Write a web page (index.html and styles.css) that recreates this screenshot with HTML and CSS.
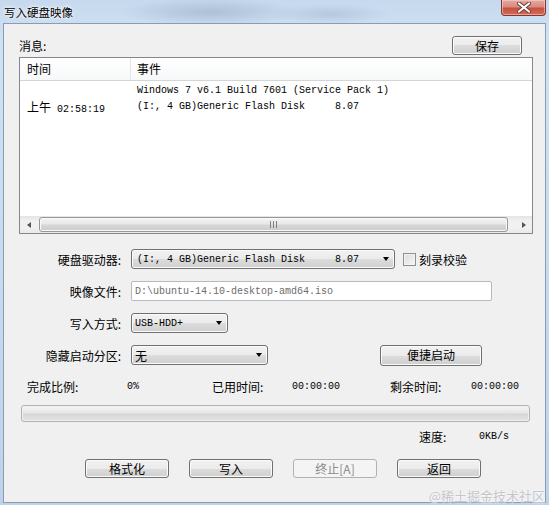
FILE: index.html
```html
<!DOCTYPE html>
<html lang="zh-CN">
  <head>
    <meta charset="UTF-8" />
    <meta name="viewport" content="width=device-width, initial-scale=1.0" />
    <title>写入硬盘映像</title>
    <link rel="stylesheet" href="styles.css">
  </head>
  <body>
    <div class="window">
      <div class="titlebar">
        <span class="title">写入硬盘映像</span>
        <div class="close-btn">
          <svg width="14" height="11" viewBox="0 0 14 11">
            <path d="M2 1.5 L12 9.5 M12 1.5 L2 9.5" stroke="#6b3b36" stroke-width="4" stroke-linecap="round" />
            <path d="M2 1.5 L12 9.5 M12 1.5 L2 9.5" stroke="#fff" stroke-width="2.2" stroke-linecap="round" />
          </svg>
        </div>
      </div>
      <div class="client">
        <div class="msg-head">
          <span>消息:</span>
          <button class="btn save-btn">保存</button>
        </div>
        <div class="listbox">
          <div class="list-header">
            <div class="col-time">时间</div>
            <div class="col-event">事件</div>
          </div>
          <div class="list-body">
            <div class="list-row">
              <div class="col-time"></div>
              <div class="col-event mono">Windows 7 v6.1 Build 7601 (Service Pack 1)</div>
            </div>
            <div class="list-row">
              <div class="col-time">上午<span class="mono"> 02:58:19</span></div>
              <div class="col-event mono">(I:, 4 GB)Generic Flash Disk     8.07</div>
            </div>
          </div>
          <div class="hscroll">
            <div class="scroll-arrow"><span class="tri-left"></span></div>
            <div class="scroll-thumb"><span class="grip"></span></div>
            <div class="scroll-arrow"><span class="tri-right"></span></div>
          </div>
        </div>
        <div class="form">
          <label class="form-label">硬盘驱动器:</label>
          <div class="form-field">
            <div class="combo drive-combo">
              <span class="mono">(I:, 4 GB)Generic Flash Disk     8.07</span>
              <span class="combo-arrow"></span>
            </div>
            <div class="check">
              <span class="check-box"></span>
              <span>刻录校验</span>
            </div>
          </div>
          <label class="form-label">映像文件:</label>
          <div class="form-field">
            <input class="textbox mono" type="text" value="D:\ubuntu-14.10-desktop-amd64.iso" readonly />
          </div>
          <label class="form-label">写入方式:</label>
          <div class="form-field">
            <div class="combo mode-combo">
              <span class="mono">USB-HDD+</span>
              <span class="combo-arrow"></span>
            </div>
          </div>
          <label class="form-label">隐藏启动分区:</label>
          <div class="form-field">
            <div class="combo hide-combo">
              <span>无</span>
              <span class="combo-arrow"></span>
            </div>
            <button class="btn quick-btn">便捷启动</button>
          </div>
        </div>
        <div class="stats">
          <span>完成比例:</span>
          <span class="mono">0%</span>
          <span>已用时间:</span>
          <span class="mono">00:00:00</span>
          <span>剩余时间:</span>
          <span class="mono">00:00:00</span>
        </div>
        <div class="progress"></div>
        <div class="speed">
          <span class="speed-label">速度:</span>
          <span class="mono">0KB/s</span>
        </div>
        <div class="actions">
          <button class="btn action-btn">格式化</button>
          <button class="btn action-btn">写入</button>
          <button class="btn action-btn" disabled>终止[A]</button>
          <button class="btn action-btn">返回</button>
        </div>
      </div>
      <div class="watermark">@稀土掘金技术社区</div>
    </div>
  </body>
</html>
```
FILE: styles.css
```css
* {
  box-sizing: border-box;
}
body {
  margin: 0;
  width: 549px;
  height: 505px;
  overflow: hidden;
  font-family: "Noto Sans CJK SC", sans-serif;
  font-size: 12px;
  color: #000;
  background-color: #bcd1e8;
}
.mono {
  font-family: "Liberation Mono", "Noto Sans CJK SC", monospace;
  font-size: 10px;
  white-space: pre;
}
.window {
  position: relative;
  height: 505px;
  display: flex;
  flex-direction: column;
  background:
    radial-gradient(ellipse 90px 14px at 210px 12px, rgba(150, 170, 195, 0.55), transparent),
    radial-gradient(ellipse 60px 10px at 330px 14px, rgba(150, 170, 195, 0.4), transparent),
    linear-gradient(180deg, #c6d9ee 0%, #d0e1f3 8%, #bed3ea 100%);
}
.titlebar {
  height: 23px;
  display: flex;
  justify-content: space-between;
  align-items: flex-start;
}
.title {
  padding: 4px 0 0 4px;
  line-height: 16px;
  font-size: 11.5px;
  text-shadow: 0 0 5px #fff, 0 0 3px #fff;
}
.close-btn {
  width: 45px;
  height: 16px;
  margin-right: 3px;
  border: 1px solid #7d3a33;
  border-top: none;
  border-radius: 0 0 4px 4px;
  background: linear-gradient(180deg, #e4aaa2 0%, #d88b80 45%, #c9503f 55%, #d46a55 100%);
  box-shadow: inset 0 0 0 1px rgba(255, 220, 210, 0.5);
  display: flex;
  align-items: center;
  justify-content: center;
}
.client {
  flex: 1;
  margin: 0 3px 2px;
  border: 1px solid #8a9cb3;
  background-color: #f0f0f0;
  display: flex;
  flex-direction: column;
}
.msg-head {
  display: flex;
  justify-content: space-between;
  align-items: center;
  height: 19px;
  margin-top: 12px;
  padding: 0 23px 0 15px;
}
.btn {
  height: 19px;
  padding: 0;
  border: 1px solid #707070;
  border-radius: 3px;
  background: linear-gradient(180deg, #f2f2f2 0%, #ebebeb 50%, #dddddd 50%, #cfcfcf 100%);
  box-shadow: inset 0 0 0 1px #fbfbfb;
  font-family: "Noto Sans CJK SC", sans-serif;
  font-size: 12px;
  line-height: 16px;
  color: #000;
}
.btn:disabled {
  border-color: #adb2b5;
  background: #f4f4f4;
  box-shadow: none;
  color: #8a8a8a;
}
.save-btn {
  width: 70px;
}
.listbox {
  height: 177px;
  margin: 2px 12px 0 15px;
  border: 1px solid #828790;
  background-color: #fff;
  display: flex;
  flex-direction: column;
}
.list-header {
  height: 23px;
  display: flex;
  line-height: 22px;
  border-bottom: 1px solid #d5d5d5;
  background: linear-gradient(180deg, #ffffff 0%, #f7f8f9 100%);
}
.list-header .col-time {
  border-right: 1px solid #e3e5e8;
}
.col-time {
  width: 111px;
  padding-left: 7px;
}
.col-event {
  padding-left: 6px;
}
.list-body {
  flex: 1;
  padding-top: 2px;
}
.list-row {
  display: flex;
  height: 16px;
  line-height: 16px;
}
.hscroll {
  height: 17px;
  display: flex;
  align-items: center;
  background: linear-gradient(180deg, #e4e4e4 0%, #f1f1f1 30%, #f1f1f1 70%, #e8e8e8 100%);
}
.scroll-arrow {
  width: 17px;
  height: 17px;
  display: flex;
  align-items: center;
  justify-content: center;
}
.tri-left {
  border-top: 3.5px solid transparent;
  border-bottom: 3.5px solid transparent;
  border-right: 4px solid #555;
}
.tri-right {
  border-top: 3.5px solid transparent;
  border-bottom: 3.5px solid transparent;
  border-left: 4px solid #555;
}
.scroll-thumb {
  flex: 1;
  height: 15px;
  margin: 0 7px 0 2px;
  border: 1px solid #979797;
  border-radius: 3px;
  background: linear-gradient(180deg, #f4f4f4 0%, #e8e8e8 45%, #d6d6d6 55%, #cbcbcb 100%);
  box-shadow: inset 0 0 0 1px #fafafa;
  display: flex;
  align-items: center;
  justify-content: center;
}
.grip {
  width: 7px;
  height: 7px;
  background: repeating-linear-gradient(90deg, #7f7f7f 0 1px, transparent 1px 3px);
}
.form {
  margin-top: 15px;
  display: grid;
  grid-template-columns: 117px 1fr;
  grid-auto-rows: 20px;
  column-gap: 10px;
  row-gap: 12px;
  align-items: center;
}
.form-label {
  text-align: right;
}
.form-field {
  display: flex;
  align-items: center;
  height: 20px;
}
.combo {
  height: 20px;
  display: flex;
  align-items: center;
  justify-content: space-between;
  padding: 0 5px 0 5px;
  border: 1px solid #707070;
  border-radius: 3px;
  background: linear-gradient(180deg, #f2f2f2 0%, #ebebeb 50%, #dddddd 50%, #cfcfcf 100%);
  box-shadow: inset 0 0 0 1px #fbfbfb;
}
.combo-arrow {
  border-left: 3.5px solid transparent;
  border-right: 3.5px solid transparent;
  border-top: 4px solid #000;
}
.drive-combo {
  width: 264px;
}
.mode-combo {
  width: 97px;
  padding-left: 3px;
}
.hide-combo {
  width: 137px;
  padding-left: 3px;
}
.check {
  display: flex;
  align-items: center;
  margin-left: 8px;
  gap: 3px;
}
.check-box {
  width: 13px;
  height: 13px;
  border: 1px solid #8e8f8f;
  background: linear-gradient(135deg, #dcdcdc 0%, #f7f7f7 100%);
  box-shadow: inset 0 0 0 1px #f4f4f4;
}
.textbox {
  width: 361px;
  height: 20px;
  margin: 0;
  padding: 0 0 0 3px;
  border: 1px solid #b6b9bf;
  border-radius: 2px;
  background-color: #fff;
  color: #6d6d6d;
  outline: none;
}
.quick-btn {
  width: 102px;
  height: 21px;
  margin-left: 112px;
}
.stats {
  margin-top: 14px;
  height: 16px;
  line-height: 16px;
  padding-left: 23px;
  display: grid;
  grid-template-columns: 100px 85px 80px 98px 81px auto;
  align-items: center;
}
.progress {
  width: 509px;
  height: 17px;
  margin: 10px 0 0 17px;
  border: 1px solid #b2b2b2;
  border-radius: 3px;
  background: linear-gradient(180deg, #f6f6f6 0%, #e6e6e6 45%, #d7d7d7 55%, #e4e4e4 100%);
  box-shadow: inset 0 0 0 1px #f0f0f0;
}
.speed {
  margin-top: 7px;
  height: 16px;
  line-height: 16px;
  display: flex;
  justify-content: flex-end;
  align-items: center;
  padding-right: 36px;
}
.speed-label {
  width: 60px;
}
.actions {
  margin-top: 14px;
  padding-left: 81px;
  display: flex;
  gap: 20px;
}
.action-btn {
  width: 84px;
}
.watermark {
  position: absolute;
  right: 4px;
  bottom: 2px;
  font-size: 13px;
  line-height: 15px;
  color: #c3c7cc;
  text-shadow: 0 0 2px #fff;
}
```
